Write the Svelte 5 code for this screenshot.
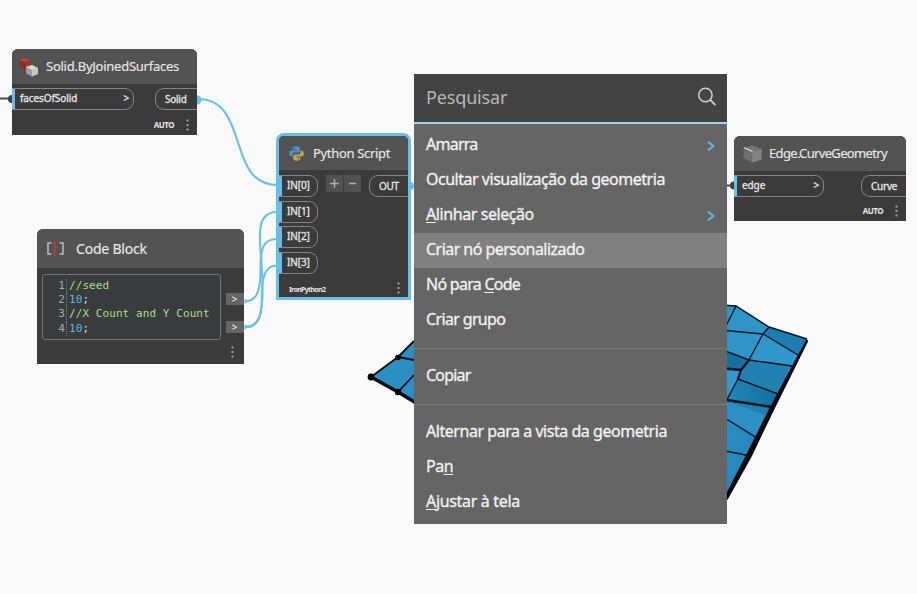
<script>
  const menu = [
    [
      { pre: 'Amarra', sub: true, ls: -0.75 },
      { pre: 'Ocultar visualização da geometria', ls: -0.48 },
      { key: 'A', post: 'linhar seleção', sub: true, ls: -0.42 },
      { pre: 'Criar nó personalizado', active: true, ls: -0.54 },
      { pre: 'Nó para ', key: 'C', post: 'ode', ls: -0.73 },
      { pre: 'Criar grupo', ls: -0.65 }
    ],
    [{ pre: 'Copiar', ls: -0.8 }],
    [
      { pre: 'Alternar para a vista da geometria', ls: -0.46 },
      { pre: 'Pa', key: 'n', ls: -0.5 },
      { key: 'A', post: 'justar à tela', ls: -0.33 }
    ]
  ];
  const code = [
    { text: '//seed', comment: true },
    { num: '10', text: ';' },
    { text: '//X Count and Y Count', comment: true },
    { num: '10', text: ';' }
  ];
  const inputs = ['IN[0]', 'IN[1]', 'IN[2]', 'IN[3]'];
</script>

{#snippet dots()}
  <svg class="dots" width="3" height="12" viewBox="0 0 3 12"><path d="M.5.5h2v2h-2zM.5 5h2v2h-2zM.5 9.5h2v2h-2z" fill="#a4a4a4" /></svg>
{/snippet}

<main>
  <svg class="scene" width="917" height="594" viewBox="0 0 917 594">
    <defs>
      <linearGradient id="sea" x1="0" y1="0" x2="1" y2="1">
        <stop offset="0" stop-color="#3195c8" /><stop offset="1" stop-color="#1c7db3" />
      </linearGradient>
      <linearGradient id="deep" x1="0" y1="0" x2="1" y2="0">
        <stop offset="0" stop-color="#2584b7" /><stop offset="1" stop-color="#126f9f" />
      </linearGradient>
    </defs>
    <path d="M414 341 398 357 371 377 398 392 414 403Z" fill="#2b8fc4" />
    <g fill="none" stroke="#050b10">
      <path d="M414 341 398 357 371 377M398 357l16 3M398 392l16-17" stroke-width="1.8" />
      <path d="M371 377 398 392 416 403" stroke-width="3.4" />
    </g>
    <circle cx="371" cy="377" r="3.4" /><circle cx="398" cy="357.5" r="2.8" /><circle cx="398" cy="392" r="3.2" />

    <path d="M720 304 736 306 769 327 807 339 727 499 720 499Z" fill="url(#sea)" />
    <path d="M736 306 769 327 763 334 749 360 720 351 720 330Z" fill="#2f94c7" />
    <path d="M769 327 807 339 798 355 763 334Z" fill="#1b7db1" />
    <path d="M763 334 798 355 792 366 749 360Z" fill="#3196ca" />
    <path d="M749 360 792 366 778 395 738 379 741 370Z" fill="#2280b2" />
    <path d="M738 379 778 394 771 407 727 400Z" fill="url(#deep)" />
    <path d="M720 350 749 360 741 370 720 368Z" fill="#176f9f" />
    <path d="M720 368 741 370 738 379 727 399 720 398Z" fill="#3398cc" />
    <path d="M727 400 771 407 757 438 720 415Z" fill="#2080b3" />
    <path d="M727 401 768 416 757 438 720 415Z" fill="#2c90c5" />
    <g fill="none" stroke="#07141d" stroke-width="1.4">
      <path d="M720 305 736 306 769 327 807 339M736 306 725 328M720 330 763 334 769 327M763 334 798 355M763 334 749 360M720 349 749 360 792 366M738 379 778 394M738 379 725 403M720 415 757 438M720 450 746 455" />
      <path d="M749 360 741 370 738 379M720 368 741 370" stroke-width="2.3" />
      <path d="M720 399 772 407" stroke-width="2.4" />
    </g>
    <path d="M806.500 339 808.300 341 773 412 752 456 728 499 725 502 725 496 746 455 770 407 792 366Z" fill="#04080b" />

    <g fill="none" stroke="#68c1e8" stroke-width="2.100">
      <path d="M198 99C250 99 226 185 277 185" />
      <path d="M246 327C262 327 262.500 305 262.500 290C262.500 262 259.500 250 260 234C260 222 264 212 277 212" />
      <path d="M246 301C256 301 260.500 292 260.500 270C260.500 250 262 239 277 239" />
      <path d="M246 327C262 327 262 308 262 292C262 274 267 265.500 277 265.500" />
    </g>
    <path d="M0 98.500h12M727 185.500h7" stroke="#4b4b4b" stroke-width="2" />
    <path d="M12 95a4 4 0 0 0 0 8zM734 181.500a4 4 0 0 0 0 8z" fill="#3f3f3f" />
    <path d="M197 95.500a4.500 4.500 0 0 1 0 9z M410 182a4 4 0 0 1 0 8zM244.500 298.500l4 2.500-4 3zM244.500 324l4 3-4 3z" fill="#68c1e8" />
  </svg>

  <section class="node solid">
    <header>
      <svg width="21" height="20" viewBox="0 0 21 20">
        <path d="M1 3 7 1l5 2v7l-5 2-5-3z" fill="#8e2a2a" /><path d="m1 3 6-2 5 2-5 2z" fill="#bd4646" /><path d="m7 5 5-2v7l-5 2z" fill="#a83232" />
        <path d="m8 10 6-2 6 3v6l-6 2.500-6-3z" fill="#9b9b9b" /><path d="m8 10 6-2 6 3-6 2z" fill="#d6d6d6" /><path d="m14 13 6-2v6l-6 2.500z" fill="#c6c6c6" />
      </svg>
      <span>Solid.ByJoinedSurfaces</span>
    </header>
    <div class="ports">
      <div class="in"><span>facesOfSolid</span><b>&gt;</b></div>
      <div class="out">Solid</div>
    </div>
    <footer><span>AUTO</span>{@render dots()}</footer>
  </section>

  <section class="node block">
    <header>
      <svg width="17" height="15" viewBox="0 0 17 15" fill="none">
        <path d="M4.500 2H1v11h3.500M12.500 2H16v11h-3.500" stroke="#bdbdbd" stroke-width="1.500" /><path d="M7.700 0v15" stroke="#b73c3c" stroke-width="2.200" />
      </svg>
      <span>Code Block</span>
    </header>
    <div class="body">
      <div class="editor">
        {#each code as line, i}
          <div class="line"><i>{i + 1}</i><code class:comment={line.comment}>{#if line.num}<em>{line.num}</em>{/if}{line.text}</code></div>
        {/each}
      </div>
      <div class="outs"><b>&gt;</b><b>&gt;</b></div>
    </div>
    <footer>{@render dots()}</footer>
  </section>

  <section class="node python">
    <header>
      <svg width="15" height="15" viewBox="0 0 15 15">
        <path d="M7 .3C4.300.3 3.700 1.300 3.700 2.500v1.300h4v.7H2.300C.9 4.500.2 5.700.2 7.400s.8 2.900 2 2.900h1.300V8.600c0-1.200.9-2 2-2h3.600c1 0 1.800-.8 1.800-1.800V2.500C10.900 1.200 9.700.3 7 .3z" fill="#4a93d6" />
        <path d="M8 14.700c2.700 0 3.300-1 3.300-2.200v-1.300h-4v-.7h5.400c1.400 0 2.100-1.200 2.100-2.900s-.8-2.900-2-2.900h-1.300v1.700c0 1.200-.9 2-2 2H5.900c-1 0-1.800.8-1.800 1.800v2.300c0 1.300 1.200 2.200 3.900 2.200z" fill="#c3a352" />
        <circle cx="5.500" cy="2.300" r=".7" fill="#555" /><circle cx="9.500" cy="12.700" r=".7" fill="#555" />
      </svg>
      <span>Python Script</span>
    </header>
    <div class="ports">
      <div class="stack">
        {#each inputs as name}<div class="in"><span>{name}</span></div>{/each}
      </div>
      <div class="pm">
        <svg width="17" height="17"><path d="M4 8.500h9M8.500 4v9" /></svg>
        <svg width="17" height="17"><path d="M5 8.500h7" /></svg>
      </div>
      <div class="out">OUT</div>
    </div>
    <footer><span>IronPython2</span>{@render dots()}</footer>
  </section>

  <section class="node edge">
    <header>
      <svg width="19" height="18" viewBox="0 0 19 18">
        <path d="M.5 3.500 9.500.5l9 3.500v10.500l-9.500 3L.5 13z" fill="#6e6e6e" /><path d="m.5 3.500 9-3 9 3.500-9 3z" fill="#757575" /><path d="m9.500 7 9-3v10.500l-9.500 3z" fill="#838383" /><path d="m1 2.500 8.500 4" stroke="#ddd" stroke-width="1.200" />
      </svg>
      <span>Edge.CurveGeometry</span>
    </header>
    <div class="ports">
      <div class="in"><span>edge</span><b>&gt;</b></div>
      <div class="out">Curve</div>
    </div>
    <footer><span>AUTO</span>{@render dots()}</footer>
  </section>

  <nav>
    <div class="search">
      <span>Pesquisar</span>
      <svg width="20" height="20" viewBox="0 0 20 20" fill="none" stroke="#d0d0d0" stroke-width="1.500"><circle cx="8.400" cy="8" r="6.700" /><path d="m13.200 12.800 5.300 5.300" stroke-width="1.800" /></svg>
    </div>
    {#each menu as group, g}
      {#if g}<hr />{/if}
      {#each group as item}
        <div class="item" class:active={item.active}>
          <span style:letter-spacing="{item.ls}px">{item.pre ?? ''}{#if item.key}<u>{item.key}</u>{/if}{item.post ?? ''}</span>
          {#if item.sub}<svg width="8" height="10" viewBox="0 0 8 10"><path d="m1 .8 5.500 4.200L1 9.200" fill="none" stroke="#63bce4" stroke-width="2" /></svg>{/if}
        </div>
      {/each}
    {/each}
  </nav>
</main>

<style>
  :global(body) { background: #f9f9f9; }
  main {
    position: relative; width: 917px; height: 594px; overflow: hidden;
    font-family: "Noto Sans", "Open Sans", sans-serif; color: #e6e6e6;
  }
  .scene { position: absolute; left: 0; top: 0; }
  .node {
    position: absolute; box-sizing: border-box; display: flex; flex-direction: column;
    background: #3b3b3b; border-radius: 6px 6px 0 0; overflow: hidden;
  }
  header { display: flex; align-items: center; flex: none; background: #535353; white-space: nowrap; -webkit-text-stroke: 0.15px; }
  header span { padding-bottom: 1px; }
  header svg, .dots { flex: none; }
  .ports { display: flex; justify-content: space-between; align-items: flex-start; padding-top: 4px; font-size: 10px; -webkit-text-stroke: 0.3px; }
  .in, .out { box-sizing: border-box; height: 22px; display: flex; align-items: center; border: 1px solid #858585; white-space: nowrap; }
  .in { border-left: 3px solid #67bfe7; border-radius: 0 9px 9px 0; padding: 0 4px 0 5px; justify-content: space-between; letter-spacing: -0.1px; }
  .in > * { padding-bottom: 2px; }
  .in b { font-weight: 500; }
  .out { border-right: 0; border-radius: 9px 0 0 9px; padding-left: 9px; letter-spacing: -0.25px; }
  footer { display: flex; align-items: center; justify-content: flex-end; flex: 1; }
  footer span { font-weight: 700; font-size: 8px; letter-spacing: -0.5px; }

  .solid { left: 12px; top: 49px; width: 185px; height: 86px; }
  .solid header { height: 35px; padding-left: 6px; gap: 7px; font-size: 13px; letter-spacing: -0.25px; }
  .solid .in { width: 122px; }
  .solid .out { width: 42px; }
  .solid footer, .edge footer { padding: 4px 8px 0 0; gap: 12px; }

  .block { left: 37px; top: 229px; width: 206.500px; height: 135px; }
  .block header { height: 39px; padding-left: 10px; gap: 12px; font-size: 14px; letter-spacing: -0.2px; }
  .body { display: flex; justify-content: space-between; padding: 6px 0 0 5px; }
  .editor {
    box-sizing: border-box; width: 179px; height: 66px; padding: 4px 0 0; border: 1px solid #747474; border-radius: 3px;
    background: #383c3c; font: 11px/14.200px "DejaVu Sans Mono", monospace; letter-spacing: 0.08px;
  }
  .line { display: flex; height: 14.200px; white-space: pre; }
  .line i { width: 24px; padding-right: 1px; box-sizing: border-box; text-align: right; font-style: normal; color: #a8a8a8; border-right: 1px dotted #777; }
  code { font: inherit; padding-left: 2px; color: #dedede; }
  code.comment { color: #b2d88b; }
  em { font-style: normal; color: #5fb5d9; }
  .outs { display: flex; flex-direction: column; gap: 16px; padding-top: 19px; }
  .outs b { width: 18px; height: 12px; background: #656565; font-size: 10px; line-height: 12px; text-align: center; font-weight: 600; }
  .block footer { padding: 0 10px 0 0; }

  .python { left: 276px; top: 133px; width: 135px; height: 167px; border: 3px solid #67bfe7; border-radius: 8px 8px 0 0; }
  .python header { height: 34px; padding-left: 10px; gap: 9px; font-size: 13px; letter-spacing: -0.32px; }
  .python .ports { padding-top: 5px; }
  .stack { display: flex; flex-direction: column; gap: 3.700px; }
  .stack .in { width: 39px; font-size: 10px; }
  .pm { display: flex; gap: 1px; }
  .pm svg { background: #515151; stroke: #aaa; stroke-width: 1.500; }
  .python .out { width: 39px; }
  .python footer { justify-content: space-between; padding: 4px 8px 0 10px; }
  .python footer span { font-size: 7px; letter-spacing: -0.65px; padding-top: 3px; }

  .edge { left: 734px; top: 136px; width: 172px; height: 85px; }
  .edge header { height: 35px; padding-left: 9px; gap: 7px; font-size: 13px; letter-spacing: -0.66px; }
  .edge .ports { padding-top: 3.500px; }
  .edge .in { width: 90px; }
  .edge .out { width: 45px; }

  nav { position: absolute; left: 414px; top: 74px; width: 313px; height: 450px; background: #656565; }
  .search {
    box-sizing: border-box; height: 50px; margin-bottom: 4px; padding: 0 10px 3px 12px; display: flex; align-items: center; justify-content: space-between;
    background: #434343; border-bottom: 2px solid #a3d3e9; font-size: 18px; letter-spacing: -0.15px; color: #b6b6b6;
  }
  .item { height: 35px; padding: 0 12px; display: flex; align-items: center; justify-content: space-between; font-size: 16px; color: #f2f2f2; white-space: nowrap; -webkit-text-stroke: 0.3px; }
  .item > span { padding-bottom: 3px; }
  .active { background: #808080; }
  u { text-decoration-thickness: 1px; text-underline-offset: 2px; }
  hr { height: 1px; margin: 10px 0; border: 0; background: #7c7c7c; }
</style>
